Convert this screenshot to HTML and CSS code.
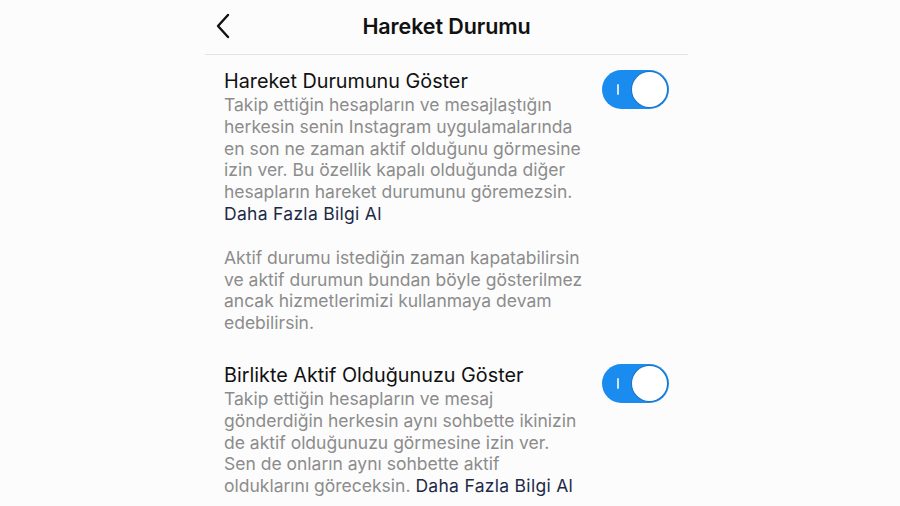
FILE: index.html
```html
<!DOCTYPE html>
<html lang="tr">
<head>
<meta charset="utf-8">
<link rel="stylesheet" href="styles.css">
</head>
<body>
<div class="screen">
  <header class="header">
    <svg class="back" width="16" height="26" viewBox="0 0 16 26"><path d="M13 2 L3 13 L13 24" fill="none" stroke="#111" stroke-width="2.4" stroke-linecap="round" stroke-linejoin="round"/></svg>
    <h1 class="title">Hareket Durumu</h1>
  </header>
  <main class="content">
    <section class="row">
      <div class="text">
        <div class="label">Hareket Durumunu Göster</div>
        <p class="desc">Takip ettiğin hesapların ve mesajlaştığın<br>herkesin senin Instagram uygulamalarında<br>en son ne zaman aktif olduğunu görmesine<br>izin ver. Bu özellik kapalı olduğunda diğer<br>hesapların hareket durumunu göremezsin.<br><a class="link">Daha Fazla Bilgi Al</a></p>
        <p class="desc gap">Aktif durumu istediğin zaman kapatabilirsin<br>ve aktif durumun bundan böyle gösterilmez<br>ancak hizmetlerimizi kullanmaya devam<br>edebilirsin.</p>
      </div>
      <div class="toggle"><span class="mark"></span><span class="knob"></span></div>
    </section>
    <section class="row second">
      <div class="text">
        <div class="label">Birlikte Aktif Olduğunuzu Göster</div>
        <p class="desc">Takip ettiğin hesapların ve mesaj<br>gönderdiğin herkesin aynı sohbette ikinizin<br>de aktif olduğunuzu görmesine izin ver.<br>Sen de onların aynı sohbette aktif<br>olduklarını göreceksin. <a class="link">Daha Fazla Bilgi Al</a></p>
      </div>
      <div class="toggle"><span class="mark"></span><span class="knob"></span></div>
    </section>
  </main>
</div>
</body>
</html>
```
FILE: styles.css
```css
* { box-sizing: border-box; }
html, body { margin: 0; padding: 0; }
body {
  background: #fcfcfc;
  font-family: Inter, "Noto Sans", "Liberation Sans", sans-serif;
  color: #111;
}
.screen {
  width: 900px;
  height: 506px;
  overflow: hidden;
  background: #fcfcfc;
}
.header {
  margin-left: 205px;
  width: 483px;
  height: 55px;
  border-bottom: 1px solid #e4e4e4;
  display: flex;
  align-items: center;
  justify-content: center;
  position: relative;
}
.back {
  position: absolute;
  left: 10px;
  top: 13px;
}
.title {
  margin: 0;
  font-size: 21.5px;
  font-weight: 600;
  letter-spacing: -0.1px;
  padding-bottom: 2px;
}
.content {
  padding-left: 224px;
  padding-top: 14px;
  width: 670px;
  box-sizing: content-box;
}
.row {
  display: flex;
  justify-content: space-between;
  align-items: flex-start;
  width: 446px;
}
.row.second { margin-top: 29px; }
.label {
  font-size: 19.8px;
  line-height: 24px;
  height: 25px;
  color: #111;
}
.desc {
  margin: 0;
  font-size: 17.5px;
  line-height: 21.8px;
  color: #8c8c8c;
  white-space: nowrap;
}
.desc.gap { margin-top: 22px; }
.link { color: #1d2a47; letter-spacing: 0.3px; }
.toggle {
  width: 67px;
  height: 39px;
  border-radius: 20px;
  background: #1a8bef;
  position: relative;
  flex: none;
  margin-top: 1px;
  margin-right: 1px;
}
.mark {
  position: absolute;
  left: 15px;
  top: 14px;
  width: 2px;
  height: 11px;
  background: #cfe6fb;
  border-radius: 1px;
}
.knob {
  position: absolute;
  right: 2px;
  top: 2px;
  width: 35px;
  height: 35px;
  border-radius: 50%;
  background: #fff;
  box-shadow: 0 0 0 1px rgba(40,70,110,0.35);
}
```
